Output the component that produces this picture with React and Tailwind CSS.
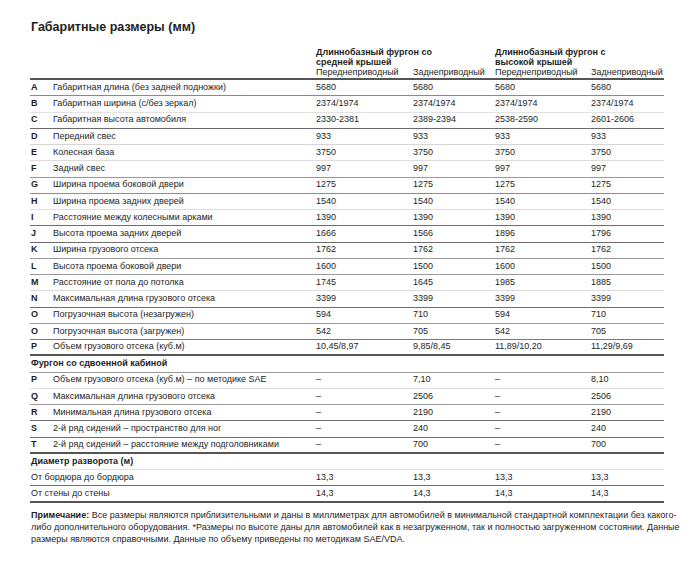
const rows = [
  ["A", "Габаритная длина (без задней подножки)", "5680", "5680", "5680", "5680", "border-b border-[#8a8a8a]"],
  ["B", "Габаритная ширина (с/без зеркал)", "2374/1974", "2374/1974", "2374/1974", "2374/1974", "border-b border-[#e2e2e2]"],
  ["C", "Габаритная высота автомобиля", "2330-2381", "2389-2394", "2538-2590", "2601-2606", "border-b border-[#6a6a6a]"],
  ["D", "Передний свес", "933", "933", "933", "933", "border-b border-[#d6d6d6]"],
  ["E", "Колесная база", "3750", "3750", "3750", "3750", "border-b border-[#dcdcdc]"],
  ["F", "Задний свес", "997", "997", "997", "997", "border-b border-[#9a9a9a]"],
  ["G", "Ширина проема боковой двери", "1275", "1275", "1275", "1275", "border-b border-[#8e8e8e]"],
  ["H", "Ширина проема задних дверей", "1540", "1540", "1540", "1540", "border-b border-[#dedede]"],
  ["I", "Расстояние между колесными арками", "1390", "1390", "1390", "1390", "border-b border-[#6e6e6e]"],
  ["J", "Высота проема задних дверей", "1666", "1566", "1896", "1796", "border-b border-[#6e6e6e]"],
  ["K", "Ширина грузового отсека", "1762", "1762", "1762", "1762", "border-b border-[#9a9a9a]"],
  ["L", "Высота проема боковой двери", "1600", "1500", "1600", "1500", "border-b border-[#9a9a9a]"],
  ["M", "Расстояние от пола до потолка", "1745", "1645", "1985", "1885", "border-b border-[#dcdcdc]"],
  ["N", "Максимальная длина грузового отсека", "3399", "3399", "3399", "3399", "border-b border-[#6e6e6e]"],
  ["O", "Погрузочная высота (незагружен)", "594", "710", "594", "710", "border-b border-[#9a9a9a]"],
  ["O", "Погрузочная высота (загружен)", "542", "705", "542", "705", "border-b border-[#7a7a7a]"],
  ["P", "Объем грузового отсека (куб.м)", "10,45/8,97", "9,85/8,45", "11,89/10,20", "11,29/9,69", "border-b-2 border-[#555]"],
];

const crew = [
  ["P", "Объем грузового отсека (куб.м) – по методике SAE", "–", "7,10", "–", "8,10", "border-b border-[#dcdcdc]"],
  ["Q", "Максимальная длина грузового отсека", "–", "2506", "–", "2506", "border-b border-[#9a9a9a]"],
  ["R", "Минимальная длина грузового отсека", "–", "2190", "–", "2190", "border-b border-[#6e6e6e]"],
  ["S", "2-й ряд сидений – пространство для ног", "–", "240", "–", "240", "border-b border-[#6e6e6e]"],
  ["T", "2-й ряд сидений – расстояние между подголовниками", "–", "700", "–", "700", "border-b-2 border-[#555]"],
];

const turning = [
  ["От бордюра до бордюра", "13,3", "13,3", "13,3", "13,3", "border-b border-[#6e6e6e]"],
  ["От стены до стены", "14,3", "14,3", "14,3", "14,3", "border-b-2 border-[#555]"],
];

function Values({ v }) {
  return (
    <>
      <div className="w-[97px]">{v[0]}</div>
      <div className="w-[82px]">{v[1]}</div>
      <div className="w-[96px]">{v[2]}</div>
      <div className="flex-1">{v[3]}</div>
    </>
  );
}

export default function App() {
  return (
    <div className="w-[700px] h-[564px] bg-white text-[#1e1e1e] pl-[30px] pt-[19px] font-['Liberation_Sans',Arial,sans-serif]">
      <h1 className="text-[12.5px] font-bold leading-[16px] pl-px">Габаритные размеры (мм)</h1>

      <div className="w-[634px] mt-[12px] text-[9px]">
        {/* header */}
        <div className="flex border-b-2 border-[#555] pb-px leading-[10px]">
          <div className="w-[286px]" />
          <div className="w-[179px]">
            <div className="font-bold">Длиннобазный фургон со<br />средней крышей</div>
            <div className="flex">
              <div className="w-[97px]">Переднеприводный</div>
              <div>Заднеприводный</div>
            </div>
          </div>
          <div className="flex-1">
            <div className="font-bold">Длиннобазный фургон с<br />высокой крышей</div>
            <div className="flex">
              <div className="w-[96px]">Переднеприводный</div>
              <div>Заднеприводный</div>
            </div>
          </div>
        </div>

        {rows.map((r, i) => (
          <div key={i} className={`flex items-center h-[16.25px] ${r[6]}`}>
            <div className="w-[23px] pl-px font-bold">{r[0]}</div>
            <div className="w-[263px]">{r[1]}</div>
            <Values v={r.slice(2, 6)} />
          </div>
        ))}

        <div className="flex items-center h-[16.25px] font-bold pl-px border-b border-[#9a9a9a]">Фургон со сдвоенной кабиной</div>

        {crew.map((r, i) => (
          <div key={i} className={`flex items-center h-[16.25px] ${r[6]}`}>
            <div className="w-[23px] pl-px font-bold">{r[0]}</div>
            <div className="w-[263px]">{r[1]}</div>
            <Values v={r.slice(2, 6)} />
          </div>
        ))}

        <div className="flex items-center h-[16.25px] font-bold pl-px border-b border-[#e2e2e2]">Диаметр разворота (м)</div>

        {turning.map((r, i) => (
          <div key={i} className={`flex items-center h-[16.25px] ${r[5]}`}>
            <div className="w-[286px] pl-px">{r[0]}</div>
            <Values v={r.slice(1, 5)} />
          </div>
        ))}

        <div className="mt-[6px] leading-[12px] pl-px">
          <div className="whitespace-nowrap"><span className="font-bold">Примечание:</span> Все размеры являются приблизительными и даны в миллиметрах для автомобилей в минимальной стандартной комплектации без какого-</div>
          <div className="whitespace-nowrap">либо дополнительного оборудования. *Размеры по высоте даны для автомобилей как в незагруженном, так и полностью загруженном состоянии. Данные</div>
          <div className="whitespace-nowrap">размеры являются справочными. Данные по объему приведены по методикам SAE/VDA.</div>
        </div>
      </div>
    </div>
  );
}
